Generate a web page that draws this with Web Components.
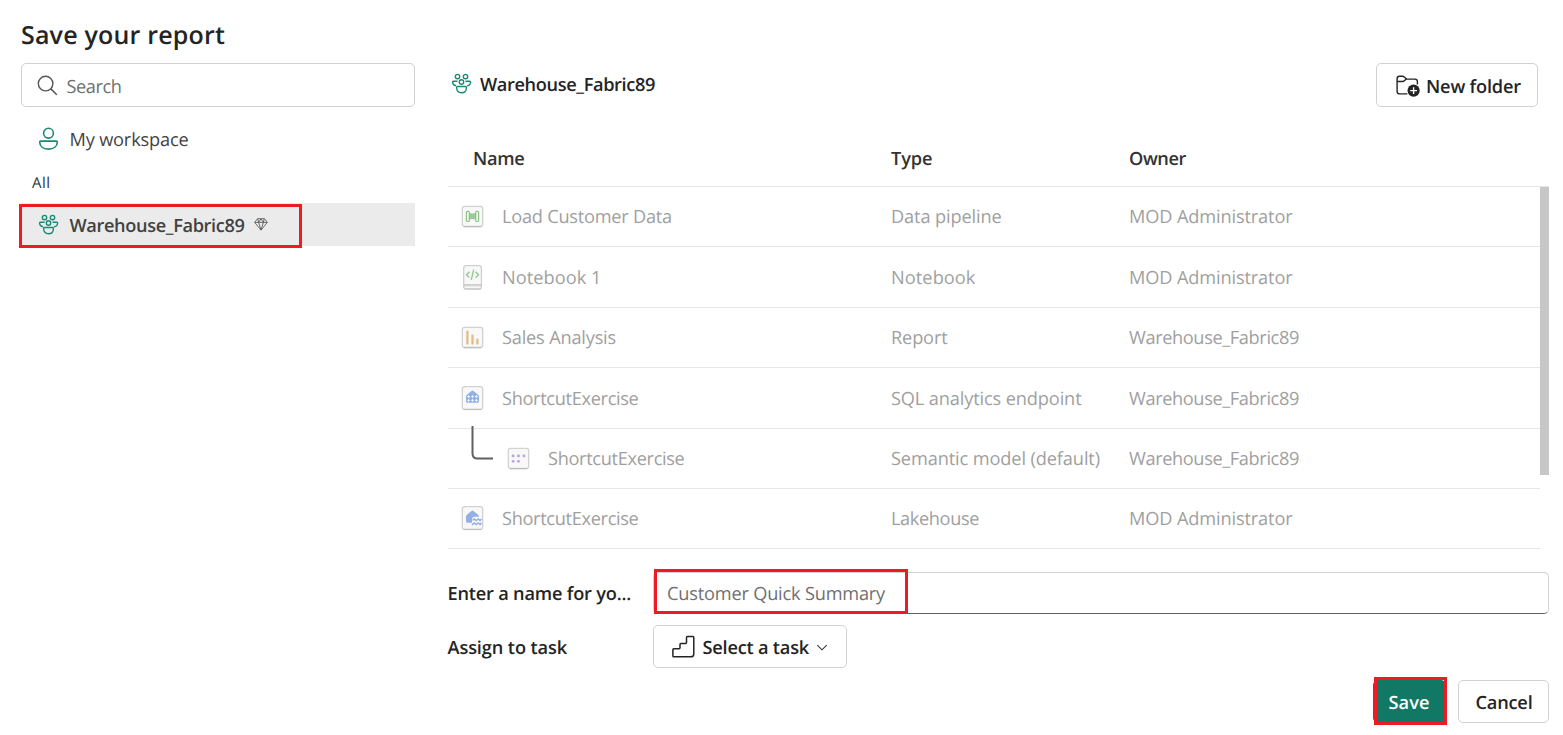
<!DOCTYPE html>
<html lang="en">
<head>
<meta charset="utf-8">
<title>Save your report</title>
<style>
html,body{margin:0;height:100%;background:#fff;overflow:hidden}
body{font-family:"Open Sans","Noto Sans",sans-serif;font-size:18.2px;color:#242424;text-rendering:geometricPrecision}
</style>
</head>
<body>
<save-report-dialog></save-report-dialog>
<script>
const ICONS = {
  search: [22,22,`<circle cx="8.6" cy="8.6" r="7.3" fill="none" stroke="#555" stroke-width="1.4"/><path d="M13.9 13.9 19.8 19.8" stroke="#555" stroke-width="1.5"/>`],
  person: [21,24,`<g fill="none" stroke="#1c8a75" stroke-width="1.6"><circle cx="10.5" cy="6.2" r="4.9"/><path d="M2.6 14.1H18.4Q19.3 14.1 19.3 15C19.3 19.5 15.8 22.1 10.5 22.1S1.7 19.5 1.7 15Q1.7 14.1 2.6 14.1Z"/></g>`],
  group: [20,20,`<g transform="translate(-.5 -.4)" fill="none" stroke="#1c8a75" stroke-width="1.4"><circle cx="6" cy="3" r="2.2"/><circle cx="14" cy="3" r="2.2"/><circle cx="10" cy="8.4" r="2.2"/><path d="M6 7.6H1.8Q1 7.6 1.1 8.6C1.3 10.7 2.5 12 4.6 12.2M14 7.6H18.2Q19.2 7.6 19.1 8.6C18.9 10.7 17.6 12 15.4 12.2M5.9 12.9H14.1Q14.9 12.9 14.9 13.8C14.9 17 13.3 19.1 10 19.1S5.1 17 5.1 13.8Q5.1 12.9 5.9 12.9Z"/></g>`],
  diamond: [14,13,`<path d="M3.5.7H10.5L13.3 4.4 7 12.2.7 4.4ZM.7 4.4H13.3M3.8.8 4.6 4.4 7 12M10.2.8 9.4 4.4 7 12M4.7 4.2 7 .9 9.3 4.2" fill="none" stroke="#555" stroke-width=".85"/>`],
  folder: [25,24,`<g transform="translate(.4 1.6)"><g fill="none" stroke="#242424" stroke-width="1.4" stroke-linejoin="round"><path d="M12 19.3H4.1Q1.7 19.3 1.7 16.9V4.1Q1.7 1.7 4.1 1.7H7.1Q8.2 1.7 8.9 2.4L11.2 4.5H19.6Q22 4.5 22 6.9V10"/><path d="M1.7 6.9H7.1Q8.2 6.9 8.9 6.2L10.9 4.4"/></g><circle cx="18.2" cy="16" r="6.1" fill="#242424"/><path d="M18.2 12.6V19.4M14.8 16H21.6" stroke="#fff" stroke-width="1.4"/></g>`],
  stairs: [24,24,`<path d="M1.8 13.7H7.1Q8 13.7 8 12.8V9.4Q8 8.5 8.9 8.5H13.6Q14.5 8.5 14.5 7.6V2.4Q14.5 1.5 15.4 1.5H20.9Q21.8 1.5 21.8 2.4V18.9Q21.8 21.8 18.9 21.8H1.8Q.9 21.8.9 20.9V14.6Q.9 13.7 1.8 13.7Z" fill="none" stroke="#242424" stroke-width="1.5"/>`],
  chevron: [12,10,`<path d="M1.3 3.2 6 7.8 10.7 3.2" fill="none" stroke="#333" stroke-width="1.1"/>`],
};
const tile = (x,y,w,h) => `<rect x="${x}" y="${y}" width="${w}" height="${h}" rx="2.3" fill="#f8f8f8" stroke="#d2d2d2" stroke-width="1.3"/><path d="M${x+1.5} ${y+h+.1}H${x+w-1.5}" stroke="#bdbdbd" stroke-width="1.2"/>`;
const house = `<path d="M11.4 6.9Q12.5 5.9 13.6 6.9L18 10.7Q19 11.5 19 12.7V16.9Q19 18.8 17.1 18.8H7.9Q6 18.8 6 16.9V12.7Q6 11.5 7 10.7Z" fill="#92b0e6"/>`;
Object.assign(ICONS, {
  pipeline: [25,28,tile(2.3,4.3,20.4,20.2) + `<path d="M9 10.8Q12.5 12.4 16 10.8V17.8Q12.5 16.2 9 17.8Z" fill="#9bc998"/><rect x="6.4" y="9.3" width="2.9" height="10.2" rx=".9" fill="#f1f8f0" stroke="#8fc48b" stroke-width="1.2"/><rect x="15.7" y="9.3" width="2.9" height="10.2" rx=".9" fill="#f1f8f0" stroke="#8fc48b" stroke-width="1.2"/>`],
  notebook: [25,28,`<g transform="translate(0 .6)"><rect x="3.7" y="2.1" width="17.7" height="23.3" rx="2.3" fill="#f8f8f8" stroke="#d0d0d0" stroke-width="1.3"/><path d="M4 21H21V22.2H4ZM4.5 25.4H20.6" fill="#ececec" stroke="#c6c6c6" stroke-width=".9"/><path d="M9.4 8.2 6.5 11.1 9.4 14M15.6 8.2 18.5 11.1 15.6 14M13.7 6 11.3 16.2" fill="none" stroke="#91c48f" stroke-width="1.3"/></g>`],
  report: [25,28,tile(2.3,4.3,20.4,20.2) + `<path d="M7.4 8.7V20.5M12.5 12.6V20.5M17.4 16.7V20.5" stroke="#e1bd84" stroke-width="2.3" stroke-linecap="round"/>`],
  sql: [25,28,tile(2.3,2.6,20.4,22.8) + house + `<path d="M7.3 12.6H9.9M11.2 12.6H13.8M15.1 12.6H17.7M7.3 16.4H9.9M11.2 16.4H13.8M15.1 16.4H17.7M8.6 11.3V13.9M12.5 11.3V13.9M16.4 11.3V13.9M8.6 15.1V17.7M12.5 15.1V17.7M16.4 15.1V17.7" stroke="#fff" stroke-width=".9"/>`],
  lakehouse: [25,28,tile(2.3,2.6,20.4,22.8) + house + `<path d="M12 14.4Q14 11.7 16 13Q17.7 11.8 19.4 13Q20.5 12.4 22 13V22.3H12Z" fill="#f8f8f8"/><path d="M12.6 16.4 14.3 15 16.2 16.6 18.2 15 20.1 16.6 21.7 15M11.8 20.4 12.6 20.4 14.3 19 16.2 20.6 18.2 19 20.1 20.6 21.7 19" fill="none" stroke="#92b0e6" stroke-width="1.5"/>`],
  semantic: [25,28,tile(2.3,4.3,20.4,20.2) + [[7.1,11.9],[12.5,11.9],[17.9,11.9],[7.1,17.3],[12.5,17.3]].map(([x,y])=>`<circle cx="${x}" cy="${y}" r="1.4" fill="#b7a3de"/>`).join('')],
});

function define(name, html, init) {
  customElements.define(name, class extends HTMLElement {
    constructor() { super(); this.attachShadow({mode:'open'}); }
    connectedCallback() {
      const t = document.createElement('template');
      t.innerHTML = typeof html === 'function' ? html(this) : html;
      this.shadowRoot.replaceChildren(t.content.cloneNode(true));
      if (init) init(this);
    }
  });
}

define('save-report-dialog', `<style>
:host{position:relative;display:grid;grid-template-columns:394px 1101px;column-gap:33px;box-sizing:border-box;width:1563px;height:735px;padding-left:21px}
aside,main{display:flex;flex-direction:column;min-width:0}
h1{margin:0;height:63px;box-sizing:border-box;padding-top:18px;font-size:25px;line-height:34px;font-weight:600}
.all{height:43px;line-height:46px;padding-left:11px;font-size:15px;color:#333}
.top{display:flex;justify-content:space-between;align-items:center;height:44px;margin-top:63px;padding-right:11px}
.ws{display:flex;align-items:center;gap:8.5px;padding-left:3.5px;font-weight:600;margin-bottom:3px}
.ws fit-text{padding-top:2px}
.field{display:grid;grid-template-columns:205px 1fr;align-items:center;justify-items:start;font-weight:600}
.field>fit-text{padding-top:2px;margin-left:-.5px}
.n{margin-top:23px;height:42px}.t{margin-top:11px;height:43px}
footer{display:flex;justify-content:flex-end;gap:12px;margin-top:12px}
</style>
<aside><h1><fit-text w="204">Save your report</fit-text></h1><search-box></search-box>
<workspace-item icon="person"><fit-text w="119">My workspace</fit-text></workspace-item>
<div class="all"><fit-text w="18.5">All</fit-text></div>
<workspace-item icon="group" selected><fit-text w="175">Warehouse_Fabric89</fit-text><ui-icon name="diamond" slot="badge"></ui-icon></workspace-item></aside>
<main><div class="top"><div class="ws"><ui-icon name="group"></ui-icon><fit-text w="175">Warehouse_Fabric89</fit-text></div>
<ui-button style="--w:162px;--h:44px;--gap:6px;--pad:18px"><ui-icon name="folder"></ui-icon><fit-text w="95">New folder</fit-text></ui-button></div>
<item-table></item-table>
<div class="field n"><fit-text w="183.5">Enter a name for yo...</fit-text><name-field></name-field></div>
<div class="field t"><fit-text w="119.5">Assign to task</fit-text><ui-button style="--w:194px;--gap:6.5px;--pad:18px"><ui-icon name="stairs"></ui-icon><fit-text w="106.5">Select a task</fit-text><ui-icon name="chevron"></ui-icon></ui-button></div>
<footer><ui-button primary style="--w:73px;--pad:14.5px"><fit-text w="41">Save</fit-text></ui-button><ui-button style="--w:91px;--pad:16.5px"><fit-text w="57">Cancel</fit-text></ui-button></footer></main>
<focus-frame style="--x:19px;--y:204px;--w:283px;--h:44px"></focus-frame>
<focus-frame style="--x:654px;--y:569px;--w:254px;--h:45px"></focus-frame>
<focus-frame style="--x:1374px;--y:677px;--w:73px;--h:48px"></focus-frame>`);

define('ui-icon', el => { const [w,h,p] = ICONS[el.getAttribute('name')];
  return `<style>:host{display:block;flex:none}svg{display:block;overflow:visible}</style><svg width="${w}" height="${h}" viewBox="0 0 ${w} ${h}">${p}</svg>`; });

define('focus-frame', `<style>:host{position:absolute;box-sizing:border-box;left:var(--x);top:var(--y);width:var(--w);height:var(--h);border:3px solid #ed1c24}</style>`);

define('search-box', `<style>:host{display:flex;align-items:center;gap:7.5px;box-sizing:border-box;height:44px;border:1px solid #d1d1d1;border-radius:5px;padding:2px 0 0 15px;color:#707070}ui-icon{margin-top:-1px}fit-text{padding-top:1px}</style><ui-icon name="search"></ui-icon><fit-text w="55">Search</fit-text>`);

define('workspace-item', el => `<style>
:host{display:flex;align-items:center;height:43px;box-sizing:border-box;color:#424242;padding-left:17px}
:host(:not([selected])){margin-top:10px}
:host([selected]){background:#ebebeb;font-weight:600}
ui-icon{width:21px;margin-right:10.5px}
:host([selected]) ui-icon{padding-left:.5px;width:20.5px}
.l{padding-top:2px}
::slotted([slot=badge]){margin-left:9.5px}
</style><ui-icon name="${el.getAttribute('icon')}"></ui-icon><div class="l"><slot></slot></div><slot name="badge"></slot>`);

define('ui-button', `<style>:host{display:flex;align-items:center;gap:var(--gap,0);box-sizing:border-box;width:var(--w);height:var(--h,43px);padding:0 0 0 var(--pad);border:1px solid #d1d1d1;border-radius:5px;background:#fff;font-weight:600;color:#242424}
:host([primary]){background:#117865;border-color:#117865;color:#fff}
::slotted(fit-text){padding-top:3px}</style><slot></slot>`);

define('name-field', `<style>:host{display:flex;align-items:center;box-sizing:border-box;width:896px;height:42px;padding:2px 0 0 13px;border:1px solid #d1d1d1;border-bottom-color:#616161;border-radius:5px;font-weight:400;color:#707070}</style><fit-text w="218">Customer Quick Summary</fit-text>`);

const ROWS = [
  [60,'pipeline','Load Customer Data',170,'Data pipeline',110.5,'MOD Administrator',163.5],
  [61,'notebook','Notebook 1',99.5,'Notebook',84.5,'MOD Administrator',163.5],
  [60,'report','Sales Analysis',114,'Report',56.5,'Warehouse_Fabric89',170],
  [61,'sql','ShortcutExercise',136.5,'SQL analytics endpoint',190.5,'Warehouse_Fabric89',170],
  [60,'semantic','ShortcutExercise',136.5,'Semantic model (default)',209,'Warehouse_Fabric89',170],
  [60,'lakehouse','ShortcutExercise',136.5,'Lakehouse',88,'MOD Administrator',163.5],
];
define('item-table', `<style>
:host{display:grid;grid-template-columns:1092px 9px;grid-template-rows:80px auto}
header{display:grid;grid-template-columns:418px 238px 1fr;grid-column:1/3;align-items:center;box-sizing:border-box;padding:24px 0 0 25px;border-bottom:1px solid #e6e6e6;font-weight:600;color:#333}
.thumb{height:288px;background:#c7c7c7}
</style><header><fit-text w="51.5">Name</fit-text><fit-text w="41.5">Type</fit-text><fit-text w="57">Owner</fit-text></header>
<div>${ROWS.map(r=>`<item-row style="height:${r[0]}px;padding-top:${r[0]-60}px" ${r[1]==='semantic'?'child':''}><ui-icon slot="icon" name="${r[1]}"></ui-icon><fit-text slot="name" w="${r[3]}">${r[2]}</fit-text><fit-text slot="type" w="${r[5]}">${r[4]}</fit-text><fit-text slot="owner" w="${r[7]}">${r[6]}</fit-text></item-row>`).join('')}</div><div class="thumb"></div>`);

define('item-row', el => `<style>
:host{position:relative;display:grid;grid-template-columns:431px 238px 1fr;align-items:center;box-sizing:border-box;padding-left:12px;border-bottom:1px solid #e6e6e6;color:#a0a0a0}
.name{display:flex;align-items:center;gap:17px}
::slotted(ui-icon){margin-top:-1px}
:host([child]) .name{padding-left:46px}
.branch{position:absolute;left:23px;top:-3px;width:22px;height:34px}
</style>${el.hasAttribute('child')?'<svg class="branch" viewBox="0 0 22 34"><path d="M1.5 0V27.5Q1.5 32.5 6.5 32.5H22" fill="none" stroke="#606060" stroke-width="2"/></svg>':''}
<div class="name"><slot name="icon"></slot><slot name="name"></slot></div><slot name="type"></slot><slot name="owner"></slot>`);

// Sets a label to an exact measure by distributing the difference between its letters.
define('fit-text', `<style>:host{display:inline-block;white-space:pre}span{display:inline-block}</style><span><slot></slot></span>`, el => {
  const s = el.shadowRoot.querySelector('span'), n = el.textContent.length;
  const natural = s.getBoundingClientRect().width;
  s.style.letterSpacing = ((+el.getAttribute('w') - natural) / n).toFixed(3) + 'px';
});
</script>
</body>
</html>
